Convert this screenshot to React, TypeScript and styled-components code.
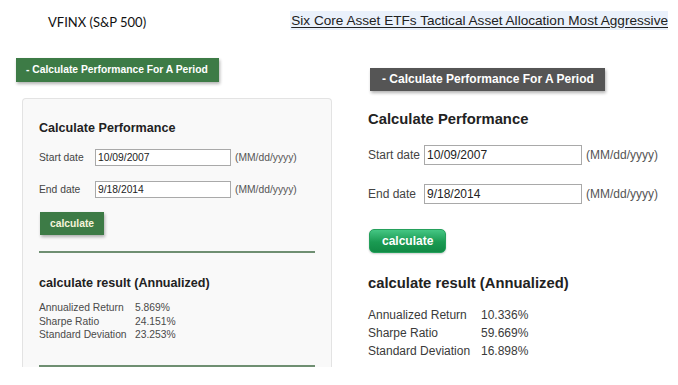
import React from 'react';
import styled, { createGlobalStyle } from 'styled-components';

const GlobalStyle = createGlobalStyle`
  body {
    margin: 0;
    background: #ffffff;
    font-family: "Liberation Sans", Arial, sans-serif;
    color: #333;
  }
`;

const Page = styled.div`
  width: 678px;
  height: 385px;
  overflow: hidden;
`;

const Header = styled.div`
  display: flex;
  justify-content: space-between;
  align-items: center;
  height: 19px;
  padding: 11px 10px 0 48px;
`;

const FundTitle = styled.div`
  font-family: Lato, "Open Sans", sans-serif;
  font-size: 13px;
  color: #111;
  padding-top: 2px;
`;

const CompareLink = styled.a`
  display: block;
  height: 19px;
  line-height: 19px;
  padding-left: 1px;
  background: #eaf1fb;
  color: #222;
  font-size: 13.6px;
  text-decoration: underline;
  text-underline-offset: 2px;
`;

const Columns = styled.div`
  display: flex;
  align-items: flex-start;
`;

const LeftCol = styled.div`
  width: 340px;
  flex-shrink: 0;
  padding-left: 16px;
  box-sizing: border-box;
`;

const RightCol = styled.div`
  flex: 1;
  padding-left: 28px;
`;

const SectionToggle = styled.div<{ $lg?: boolean }>`
  display: inline-block;
  height: ${(p) => (p.$lg ? 23 : 24)}px;
  line-height: ${(p) => (p.$lg ? 23 : 24)}px;
  margin: ${(p) => (p.$lg ? '38px 0 0 2px' : '28px 0 0 0')};
  padding: ${(p) => (p.$lg ? '0 11px 0 12px' : '0 11px 0 10px')};
  background: ${(p) => (p.$lg ? '#555555' : '#3d7b46')};
  color: #fff;
  font-weight: bold;
  font-size: ${(p) => (p.$lg ? 12 : 10.3)}px;
  box-shadow: 1px 2px 3px rgba(0, 0, 0, 0.3);
`;

const Panel = styled.div`
  margin: 16px 0 0 6px;
  width: 310px;
  height: 269px;
  box-sizing: border-box;
  border: 1px solid #e3e3e3;
  border-bottom: none;
  border-radius: 4px 4px 0 0;
  background: #f9f9f9;
  padding: 22px 16px 0;
  overflow: hidden;
`;

const Heading = styled.h3<{ $lg?: boolean; $mt: number }>`
  margin: ${(p) => p.$mt}px 0 0;
  font-size: ${(p) => (p.$lg ? 14.8 : 12.6)}px;
  line-height: ${(p) => (p.$lg ? 18 : 15)}px;
  font-weight: bold;
  color: #222;
`;

const DateRow = styled.div<{ $lg?: boolean; $mt: number }>`
  display: flex;
  align-items: center;
  height: ${(p) => (p.$lg ? 20 : 17)}px;
  margin-top: ${(p) => p.$mt}px;
  font-size: ${(p) => (p.$lg ? 12 : 10.3)}px;
  color: #444;
`;

const DateLabel = styled.label`
  width: 56px;
  flex-shrink: 0;
`;

const DateInput = styled.input<{ $lg?: boolean }>`
  box-sizing: border-box;
  width: ${(p) => (p.$lg ? 158 : 136)}px;
  height: 100%;
  margin: 0;
  padding: 0 2px;
  border: 1px solid #a9a9a9;
  background: #fff;
  font-family: inherit;
  font-size: inherit;
  color: #222;
  outline: none;
`;

const Hint = styled.span`
  margin-left: 4px;
  color: #555;
`;

const CalcButton = styled.button<{ $lg?: boolean; $mt: number }>`
  display: block;
  margin: ${(p) => p.$mt}px 0 0 1px;
  height: ${(p) => (p.$lg ? 24 : 23)}px;
  padding: 0 ${(p) => (p.$lg ? 12 : 10)}px;
  font-family: inherit;
  font-weight: bold;
  font-size: ${(p) => (p.$lg ? 12 : 10.3)}px;
  cursor: pointer;
  ${(p) =>
    p.$lg
      ? `
    color: #fff;
    border: 1px solid #25a05c;
    border-radius: 5px;
    background: linear-gradient(#44c683, #1a9a52 55%, #118a45);
    box-shadow: 0 1px 2px rgba(0, 0, 0, 0.2);
  `
      : `
    color: #f6f4da;
    border: none;
    border-radius: 0;
    background: #3d7b46;
    box-shadow: 1px 2px 3px rgba(0, 0, 0, 0.3);
  `}
`;

const Rule = styled.hr<{ $mt: number }>`
  margin: ${(p) => p.$mt}px 0 0;
  border: none;
  height: 2px;
  background: #6f8f72;
`;

const ResultGrid = styled.div<{ $lg?: boolean; $mt: number }>`
  display: grid;
  grid-template-columns: ${(p) => (p.$lg ? 113 : 96)}px auto;
  margin-top: ${(p) => p.$mt}px;
  font-size: ${(p) => (p.$lg ? 12 : 10.3)}px;
  line-height: ${(p) => (p.$lg ? 18 : 13.5)}px;
  color: ${(p) => (p.$lg ? '#3a3a3a' : '#4a4a4a')};
`;

type Result = { label: string; value: string };

const leftResults: Result[] = [
  { label: 'Annualized Return', value: '5.869%' },
  { label: 'Sharpe Ratio', value: '24.151%' },
  { label: 'Standard Deviation', value: '23.253%' },
];

const rightResults: Result[] = [
  { label: 'Annualized Return', value: '10.336%' },
  { label: 'Sharpe Ratio', value: '59.669%' },
  { label: 'Standard Deviation', value: '16.898%' },
];

const Results: React.FC<{ rows: Result[]; lg?: boolean; mt: number }> = ({ rows, lg, mt }) => (
  <ResultGrid $lg={lg} $mt={mt}>
    {rows.map((r) => (
      <React.Fragment key={r.label}>
        <span>{r.label}</span>
        <span>{r.value}</span>
      </React.Fragment>
    ))}
  </ResultGrid>
);

const App: React.FC = () => {
  return (
    <Page>
      <GlobalStyle />
      <Header>
        <FundTitle>VFINX (S&amp;P 500)</FundTitle>
        <CompareLink href="#">Six Core Asset ETFs Tactical Asset Allocation Most Aggressive</CompareLink>
      </Header>
      <Columns>
        <LeftCol>
          <SectionToggle>- Calculate Performance For A Period</SectionToggle>
          <Panel>
            <Heading $mt={0}>Calculate Performance</Heading>
            <DateRow $mt={13}>
              <DateLabel>Start date</DateLabel>
              <DateInput defaultValue="10/09/2007" readOnly />
              <Hint>(MM/dd/yyyy)</Hint>
            </DateRow>
            <DateRow $mt={15}>
              <DateLabel>End date</DateLabel>
              <DateInput defaultValue="9/18/2014" readOnly />
              <Hint>(MM/dd/yyyy)</Hint>
            </DateRow>
            <CalcButton $mt={14}>calculate</CalcButton>
            <Rule $mt={16} />
            <Heading $mt={23}>calculate result (Annualized)</Heading>
            <Results rows={leftResults} mt={10} />
            <Rule $mt={23} />
          </Panel>
        </LeftCol>
        <RightCol>
          <SectionToggle $lg>- Calculate Performance For A Period</SectionToggle>
          <Heading $lg $mt={19}>Calculate Performance</Heading>
          <DateRow $lg $mt={17}>
            <DateLabel>Start date</DateLabel>
            <DateInput $lg defaultValue="10/09/2007" readOnly />
            <Hint>(MM/dd/yyyy)</Hint>
          </DateRow>
          <DateRow $lg $mt={19}>
            <DateLabel>End date</DateLabel>
            <DateInput $lg defaultValue="9/18/2014" readOnly />
            <Hint>(MM/dd/yyyy)</Hint>
          </DateRow>
          <CalcButton $lg $mt={25}>calculate</CalcButton>
          <Heading $lg $mt={21}>calculate result (Annualized)</Heading>
          <Results rows={rightResults} lg mt={14} />
        </RightCol>
      </Columns>
    </Page>
  );
};

export default App;
